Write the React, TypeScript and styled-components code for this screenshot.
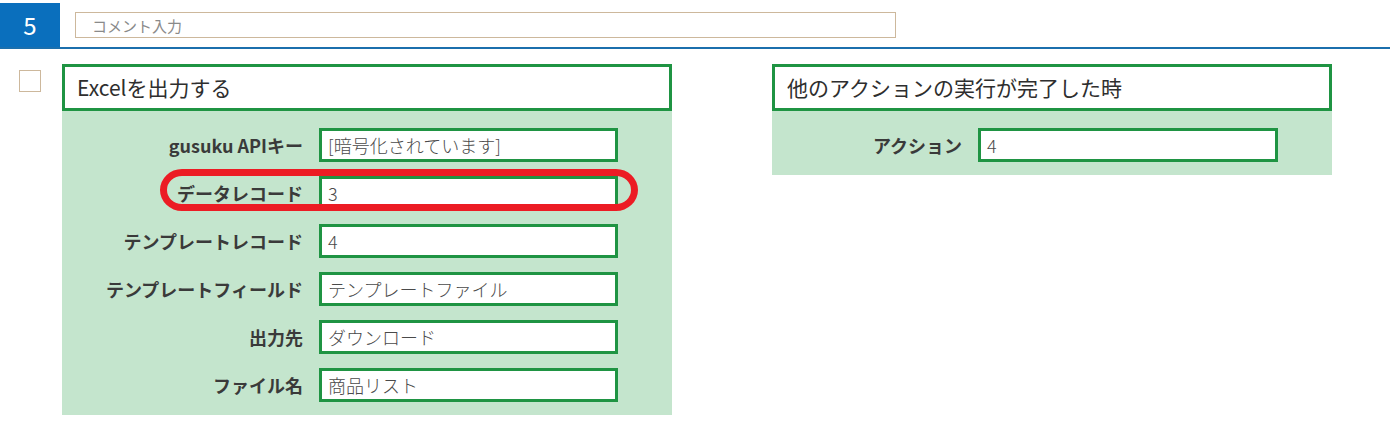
import styled, { createGlobalStyle } from 'styled-components';

const GlobalStyle = createGlobalStyle`
    body {
        margin: 0;
        background: #ffffff;
        font-family: "Noto Sans CJK JP", "Noto Sans", sans-serif;
    }
`;

const Page = styled.div`
    width: 1392px;
    height: 424px;
    overflow: hidden;
`;

const Header = styled.header`
    display: flex;
    align-items: flex-start;
    width: 1390px;
    height: 44px;
    margin-top: 3px;
    border-bottom: 2px solid #1b6fad;
`;

const StepNumber = styled.div`
    width: 60px;
    height: 44px;
    background: #0a6fbd;
    color: #ffffff;
    font-size: 24px;
    line-height: 44px;
    text-align: center;
`;

const CommentInput = styled.input`
    box-sizing: border-box;
    width: 821px;
    height: 26px;
    margin: 9px 0 0 15px;
    padding: 0 0 0 16px;
    border: 1px solid #cdb89c;
    font-family: inherit;
    font-size: 15px;
    color: #333;
    outline: none;

    &::placeholder {
        color: #8a8a8a;
    }
`;

const Main = styled.main`
    display: flex;
    align-items: flex-start;
    padding-top: 15px;
`;

const CheckBox = styled.div`
    box-sizing: border-box;
    width: 22px;
    height: 22px;
    margin: 6px 0 0 19px;
    border: 1px solid #cdb89c;
    background: #ffffff;
`;

const Card = styled.section<{ $width: number; $gap: number }>`
    width: ${(p) => p.$width}px;
    margin-left: ${(p) => p.$gap}px;
`;

const CardTitle = styled.h2`
    box-sizing: border-box;
    height: 47px;
    margin: 0;
    padding-left: 12px;
    border: 3px solid #1f9443;
    background: #ffffff;
    font-size: 21px;
    font-weight: 400;
    line-height: 41px;
    color: #2e2e2e;
`;

const CardBody = styled.div`
    display: flex;
    flex-direction: column;
    gap: 14px;
    padding: 17px 0 13px;
    background: #c4e5cd;
`;

const Row = styled.div`
    position: relative;
    display: flex;
    align-items: center;
    height: 34px;
`;

const Label = styled.label<{ $width: number }>`
    width: ${(p) => p.$width}px;
    padding-right: 16px;
    box-sizing: border-box;
    text-align: right;
    font-size: 18px;
    font-weight: 700;
    color: #3a3a3a;
    white-space: nowrap;
`;

const Field = styled.div<{ $width: number }>`
    box-sizing: border-box;
    width: ${(p) => p.$width}px;
    height: 34px;
    padding-left: 6px;
    border: 3px solid #1f9443;
    background: #ffffff;
    font-size: 18px;
    font-weight: 300;
    line-height: 28px;
    color: #4a4a4a;
    white-space: nowrap;
`;

const Highlight = styled.div`
    position: absolute;
    left: 98px;
    top: -7px;
    width: 478px;
    height: 42px;
    box-sizing: border-box;
    border: 7px solid #ec1c24;
    border-radius: 22px / 21px;
    pointer-events: none;
`;

const excelRows = [
    { label: 'gusuku APIキー', value: '[暗号化されています]' },
    { label: 'データレコード', value: '3', marked: true },
    { label: 'テンプレートレコード', value: '4' },
    { label: 'テンプレートフィールド', value: 'テンプレートファイル' },
    { label: '出力先', value: 'ダウンロード' },
    { label: 'ファイル名', value: '商品リスト' },
];

export default function App() {
    return (
        <Page>
            <GlobalStyle />
            <Header>
                <StepNumber>5</StepNumber>
                <CommentInput placeholder="コメント入力" />
            </Header>
            <Main>
                <CheckBox />
                <Card $width={610} $gap={21}>
                    <CardTitle>Excelを出力する</CardTitle>
                    <CardBody>
                        {excelRows.map((row) => (
                            <Row key={row.label}>
                                <Label $width={257}>{row.label}</Label>
                                <Field $width={299}>{row.value}</Field>
                                {row.marked && <Highlight />}
                            </Row>
                        ))}
                    </CardBody>
                </Card>
                <Card $width={560} $gap={100}>
                    <CardTitle>他のアクションの実行が完了した時</CardTitle>
                    <CardBody>
                        <Row>
                            <Label $width={206}>アクション</Label>
                            <Field $width={300}>4</Field>
                        </Row>
                    </CardBody>
                </Card>
            </Main>
        </Page>
    );
}
